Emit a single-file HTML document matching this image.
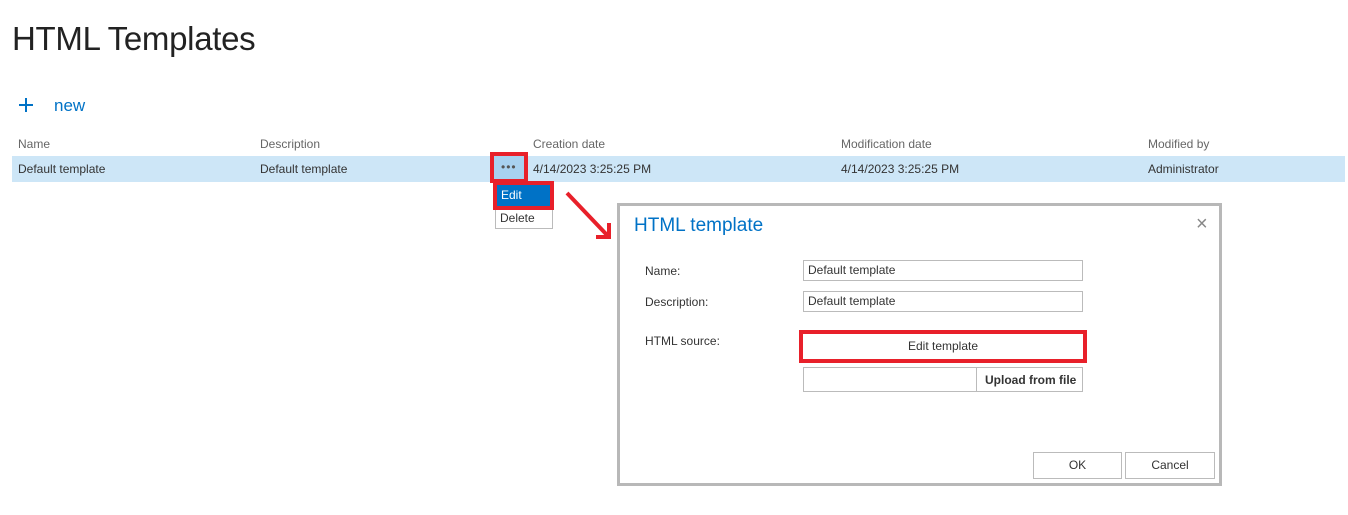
<!DOCTYPE html>
<html><head><meta charset="utf-8"><style>
body{margin:0;width:1348px;height:515px;background:#fff;font-family:"Liberation Sans",sans-serif;position:relative;overflow:hidden;color:#333}
.a{position:absolute;white-space:nowrap}
.h{font-size:12px;color:#666}
.c{font-size:12px;color:#333}
.box{position:absolute;border:1px solid #bbb;background:#fff;font-size:12px;line-height:18px;padding-left:4px;box-sizing:border-box;color:#333}
</style></head><body>
<div class="a" style="left:12px;top:20px;font-size:33px;color:#222;letter-spacing:-0.3px">HTML Templates</div>
<div class="a" style="left:19px;top:97px;width:14px;height:2px;background:#0072c6;top:104px"></div>
<div class="a" style="left:25px;top:98px;width:2px;height:14px;background:#0072c6"></div>
<div class="a" style="left:54px;top:96px;font-size:17px;color:#0072c6">new</div>
<div class="a h" style="left:18px;top:137px">Name</div>
<div class="a h" style="left:260px;top:137px">Description</div>
<div class="a h" style="left:533px;top:137px">Creation date</div>
<div class="a h" style="left:841px;top:137px">Modification date</div>
<div class="a h" style="left:1148px;top:137px">Modified by</div>
<div class="a" style="left:12px;top:156px;width:1333px;height:26px;background:#cde6f7"></div>
<div class="a c" style="left:18px;top:162px">Default template</div>
<div class="a c" style="left:260px;top:162px">Default template</div>
<div class="a c" style="left:533px;top:162px">4/14/2023 3:25:25 PM</div>
<div class="a c" style="left:841px;top:162px">4/14/2023 3:25:25 PM</div>
<div class="a c" style="left:1148px;top:162px">Administrator</div>
<div class="a" style="left:490px;top:152px;width:38px;height:31px;border:4px solid #e8202a;box-sizing:border-box;background:#a8d1f0"></div>
<div class="a" style="left:501px;top:160px;font-size:12px;color:#555;letter-spacing:1px">•••</div>
<div class="a" style="left:495px;top:182px;width:58px;height:47px;border:1px solid #bbb;box-sizing:border-box;background:#fff"></div>
<div class="a" style="left:493px;top:181px;width:61px;height:29px;border:4px solid #e8202a;box-sizing:border-box;background:#0072c6"></div>
<div class="a" style="left:501px;top:188px;font-size:12px;color:#fff">Edit</div>
<div class="a c" style="left:500px;top:211px">Delete</div>
<svg class="a" style="left:560px;top:185px" width="56" height="60"><path d="M7 8 L47 50" stroke="#e8202a" stroke-width="4"/><path d="M36 52 L49 52 L49 38" stroke="#e8202a" stroke-width="4" fill="none"/></svg>
<div class="a" style="left:617px;top:203px;width:605px;height:283px;border:3px solid #b8b8b8;box-sizing:border-box;background:#fff"></div>
<div class="a" style="left:634px;top:215px;font-size:19px;color:#0072c6">HTML template</div>
<div class="a" style="left:1196px;top:213px;font-size:20px;color:#888">×</div>
<div class="a c" style="left:645px;top:264px">Name:</div>
<div class="a c" style="left:645px;top:295px">Description:</div>
<div class="a c" style="left:645px;top:334px">HTML source:</div>
<div class="box" style="left:803px;top:260px;width:280px;height:21px">Default template</div>
<div class="box" style="left:803px;top:291px;width:280px;height:21px">Default template</div>
<div class="a" style="left:799px;top:330px;width:288px;height:33px;border:4px solid #e8202a;box-sizing:border-box;background:#fff"></div>
<div class="a c" style="left:803px;top:339px;width:280px;text-align:center">Edit template</div>
<div class="box" style="left:803px;top:367px;width:280px;height:25px"></div>
<div class="a" style="left:976px;top:368px;width:1px;height:23px;background:#bbb"></div>
<div class="a c" style="left:985px;top:373px;font-weight:bold">Upload from file</div>
<div class="box" style="left:1033px;top:452px;width:89px;height:27px;text-align:center;line-height:25px;padding:0">OK</div>
<div class="box" style="left:1125px;top:452px;width:90px;height:27px;text-align:center;line-height:25px;padding:0">Cancel</div>
</body></html>
